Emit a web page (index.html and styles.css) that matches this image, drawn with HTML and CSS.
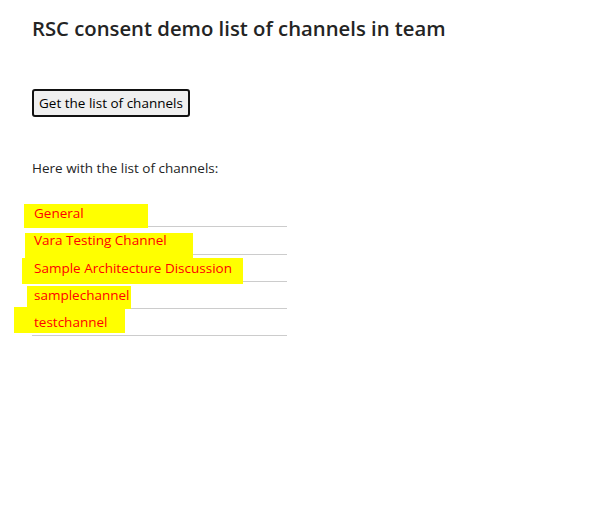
FILE: index.html
```html
<!DOCTYPE html>
<html>
<head>
<meta charset="utf-8">
<link rel="stylesheet" href="styles.css">
</head>
<body>
<main class="page">
  <h1 class="title">RSC consent demo list of channels in team</h1>
  <button class="btn">Get the list of channels</button>
  <p class="intro">Here with the list of channels:</p>
  <ul class="channels">
    <li class="channel"><span class="hl hl-1"></span><span class="name">General</span></li>
    <li class="channel"><span class="hl hl-2"></span><span class="name">Vara Testing Channel</span></li>
    <li class="channel"><span class="hl hl-3"></span><span class="name">Sample Architecture Discussion</span></li>
    <li class="channel"><span class="hl hl-4"></span><span class="name">samplechannel</span></li>
    <li class="channel"><span class="hl hl-5"></span><span class="name">testchannel</span></li>
  </ul>
</main>
</body>
</html>
```
FILE: styles.css
```css
html, body {
  margin: 0;
  padding: 0;
  background: #fff;
}
body {
  font-family: "Open Sans", "Noto Sans", sans-serif;
  color: #242424;
}
.page {
  padding: 14px 32px 0 32px;
  display: flex;
  flex-direction: column;
  align-items: flex-start;
}
.title {
  margin: 0;
  font-size: 20.3px;
  font-weight: 600;
  line-height: 28px;
  color: #242424;
}
.btn {
  margin-top: 47px;
  font-family: inherit;
  font-size: 13.5px;
  line-height: 18px;
  padding: 3px 5px;
  background: #efefef;
  color: #000;
  border: 2px solid #111;
  border-radius: 3px;
}
.intro {
  margin: 42px 0 0 0;
  font-size: 13.5px;
  line-height: 18px;
}
.channels {
  list-style: none;
  margin: 23px 0 0 0;
  padding: 0;
  width: 255px;
}
.channel {
  position: relative;
  height: 26.25px;
  border-bottom: 1px solid #cccccc;
  display: flex;
  align-items: center;
  padding-left: 2px;
}
.name {
  position: relative;
  color: #ff0000;
  font-size: 13.5px;
}
.hl {
  position: absolute;
  background: #ffff00;
}
.hl-1 { left: -8px; top: 4px; width: 124px; height: 24px; }
.hl-2 { left: -7px; top: 6px; width: 168px; height: 25px; }
.hl-3 { left: -10px; top: 3px; width: 221px; height: 26px; }
.hl-4 { left: -5px; top: 4px; width: 104px; height: 23px; }
.hl-5 { left: -18px; top: -2px; width: 111px; height: 26px; }
```
